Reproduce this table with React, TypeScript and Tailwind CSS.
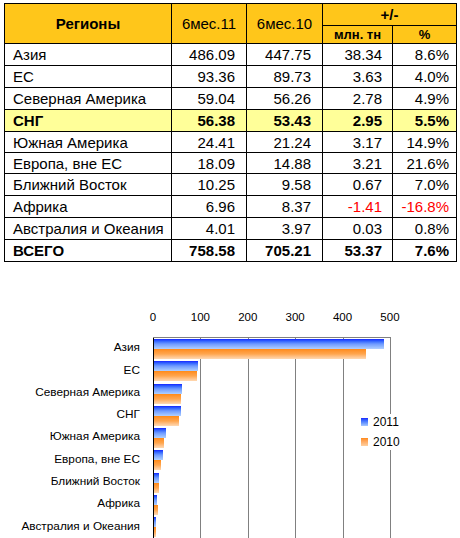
const rows = [
  { name: "Азия", a: "486.09", b: "447.75", d: "38.34", p: "8.6%", h: "h-[22px]" },
  { name: "ЕС", a: "93.36", b: "89.73", d: "3.63", p: "4.0%", h: "h-[22px]" },
  { name: "Северная Америка", a: "59.04", b: "56.26", d: "2.78", p: "4.9%", h: "h-[22px]" },
  { name: "СНГ", a: "56.38", b: "53.43", d: "2.95", p: "5.5%", h: "h-[22px]", hl: true },
  { name: "Южная Америка", a: "24.41", b: "21.24", d: "3.17", p: "14.9%", h: "h-[21px]" },
  { name: "Европа, вне ЕС", a: "18.09", b: "14.88", d: "3.21", p: "21.6%", h: "h-[21px]" },
  { name: "Ближний Восток", a: "10.25", b: "9.58", d: "0.67", p: "7.0%", h: "h-[22px]" },
  { name: "Африка", a: "6.96", b: "8.37", d: "-1.41", p: "-16.8%", h: "h-[22px]", neg: true },
  { name: "Австралия и Океания", a: "4.01", b: "3.97", d: "0.03", p: "0.8%", h: "h-[22px]" },
  { name: "ВСЕГО", a: "758.58", b: "705.21", d: "53.37", p: "7.6%", h: "h-[22px]", total: true },
];

// chart data: 2011 / 2010
const bars = [
  ["Азия", 486.09, 447.75],
  ["ЕС", 93.36, 89.73],
  ["Северная Америка", 59.04, 56.26],
  ["СНГ", 56.38, 53.43],
  ["Южная Америка", 24.41, 21.24],
  ["Европа, вне ЕС", 18.09, 14.88],
  ["Ближний Восток", 10.25, 9.58],
  ["Африка", 6.96, 8.37],
  ["Австралия и Океания", 4.01, 3.97],
] as const;

const PLOT_W = 237;
const px = (v: number) => (v / 500) * PLOT_W;

function Table() {
  const th = "border border-black bg-[#ffc61a]";
  return (
    <table className="border-collapse table-fixed w-[452px] text-[15px] leading-none text-black">
      <colgroup>
        <col className="w-[167px]" />
        <col className="w-[75px]" />
        <col className="w-[76px]" />
        <col className="w-[70px]" />
        <col className="w-[64px]" />
      </colgroup>
      <thead>
        <tr>
          <th rowSpan={2} className={`${th} font-bold`}>Регионы</th>
          <th rowSpan={2} className={`${th} font-normal`}>6мес.11</th>
          <th rowSpan={2} className={`${th} font-normal`}>6мес.10</th>
          <th colSpan={2} className={`${th} font-bold h-[22px]`}>+/-</th>
        </tr>
        <tr>
          <th className={`${th} font-bold text-[13px] h-[18px]`}>млн. тн</th>
          <th className={`${th} font-bold text-[13px] h-[18px]`}>%</th>
        </tr>
      </thead>
      <tbody>
        {rows.map((r) => {
          const bg = r.hl ? "bg-[#ffff99]" : "bg-white";
          const bold = r.hl || r.total ? "font-bold" : "";
          const red = r.neg ? "text-[#ff0000]" : "";
          return (
            <tr key={r.name} className={`${bg} ${bold}`}>
              <td className={`border border-black pl-[8px] ${r.h}`}>{r.name}</td>
              <td className="border border-black text-right pr-[11px]">{r.a}</td>
              <td className="border border-black text-right pr-[11px]">{r.b}</td>
              <td className={`border border-black text-right pr-[10px] ${red}`}>{r.d}</td>
              <td className={`border border-black text-right pr-[7px] ${red}`}>{r.p}</td>
            </tr>
          );
        })}
      </tbody>
    </table>
  );
}

function Chart() {
  return (
    <div className="mt-[49px] text-black">
      <div className="ml-[153px] w-[237px] flex justify-between leading-[12px] text-[11.5px]">
        {[0, 100, 200, 300, 400, 500].map((t) => (
          <div key={t} className="w-0 flex justify-center">
            <span>{t}</span>
          </div>
        ))}
      </div>
      <div className="mt-[14px] flex">
        <div className="w-[153px] flex flex-col pr-[13px] text-[11.8px]">
          {bars.map(([n]) => (
            <div key={n} className="h-[22.3px] flex items-center justify-end whitespace-nowrap">
              {n}
            </div>
          ))}
        </div>
        <div className="relative w-[238px] border-t border-[#808080]">
          {[1, 2, 3, 4, 5].map((i) => (
            <div
              key={i}
              className="absolute top-0 bottom-0 w-px bg-[#808080]"
              style={{ left: Math.round(px(i * 100)) }}
            />
          ))}
          <div className="absolute left-0 top-0 bottom-0 w-px bg-black" />
          <div className="relative flex flex-col">
            {bars.map(([n, a, b]) => (
              <div key={n} className="h-[22.3px] pt-[1px] pl-px">
                <div
                  className="h-[10px] bg-gradient-to-b from-[#1a1aff] via-[#6f9bff] to-[#b0d0ff]"
                  style={{ width: px(a) }}
                />
                <div
                  className="h-[10px] bg-gradient-to-b from-[#ff8a10] via-[#ffa64d] to-[#ffd9b3]"
                  style={{ width: px(b) }}
                />
              </div>
            ))}
          </div>
          <div className="absolute left-[204px] top-[76px] bg-white py-[1px] pr-[8px] pl-[4px] text-[12px] leading-[14px] flex flex-col gap-[6px]">
            <div className="flex items-center gap-[5px]">
              <span className="w-[7px] h-[8px] bg-gradient-to-b from-[#2020ff] to-[#a8c8ff]" />
              <span>2011</span>
            </div>
            <div className="flex items-center gap-[5px]">
              <span className="w-[7px] h-[8px] bg-gradient-to-b from-[#ff8a10] to-[#ffd0a0]" />
              <span>2010</span>
            </div>
          </div>
        </div>
      </div>
    </div>
  );
}

export default function App() {
  return (
    <div className="w-[460px] h-[538px] bg-white overflow-hidden font-['Liberation_Sans',Arial,sans-serif]">
      <div className="pt-[3px] pl-[4px]">
        <Table />
      </div>
      <Chart />
    </div>
  );
}
